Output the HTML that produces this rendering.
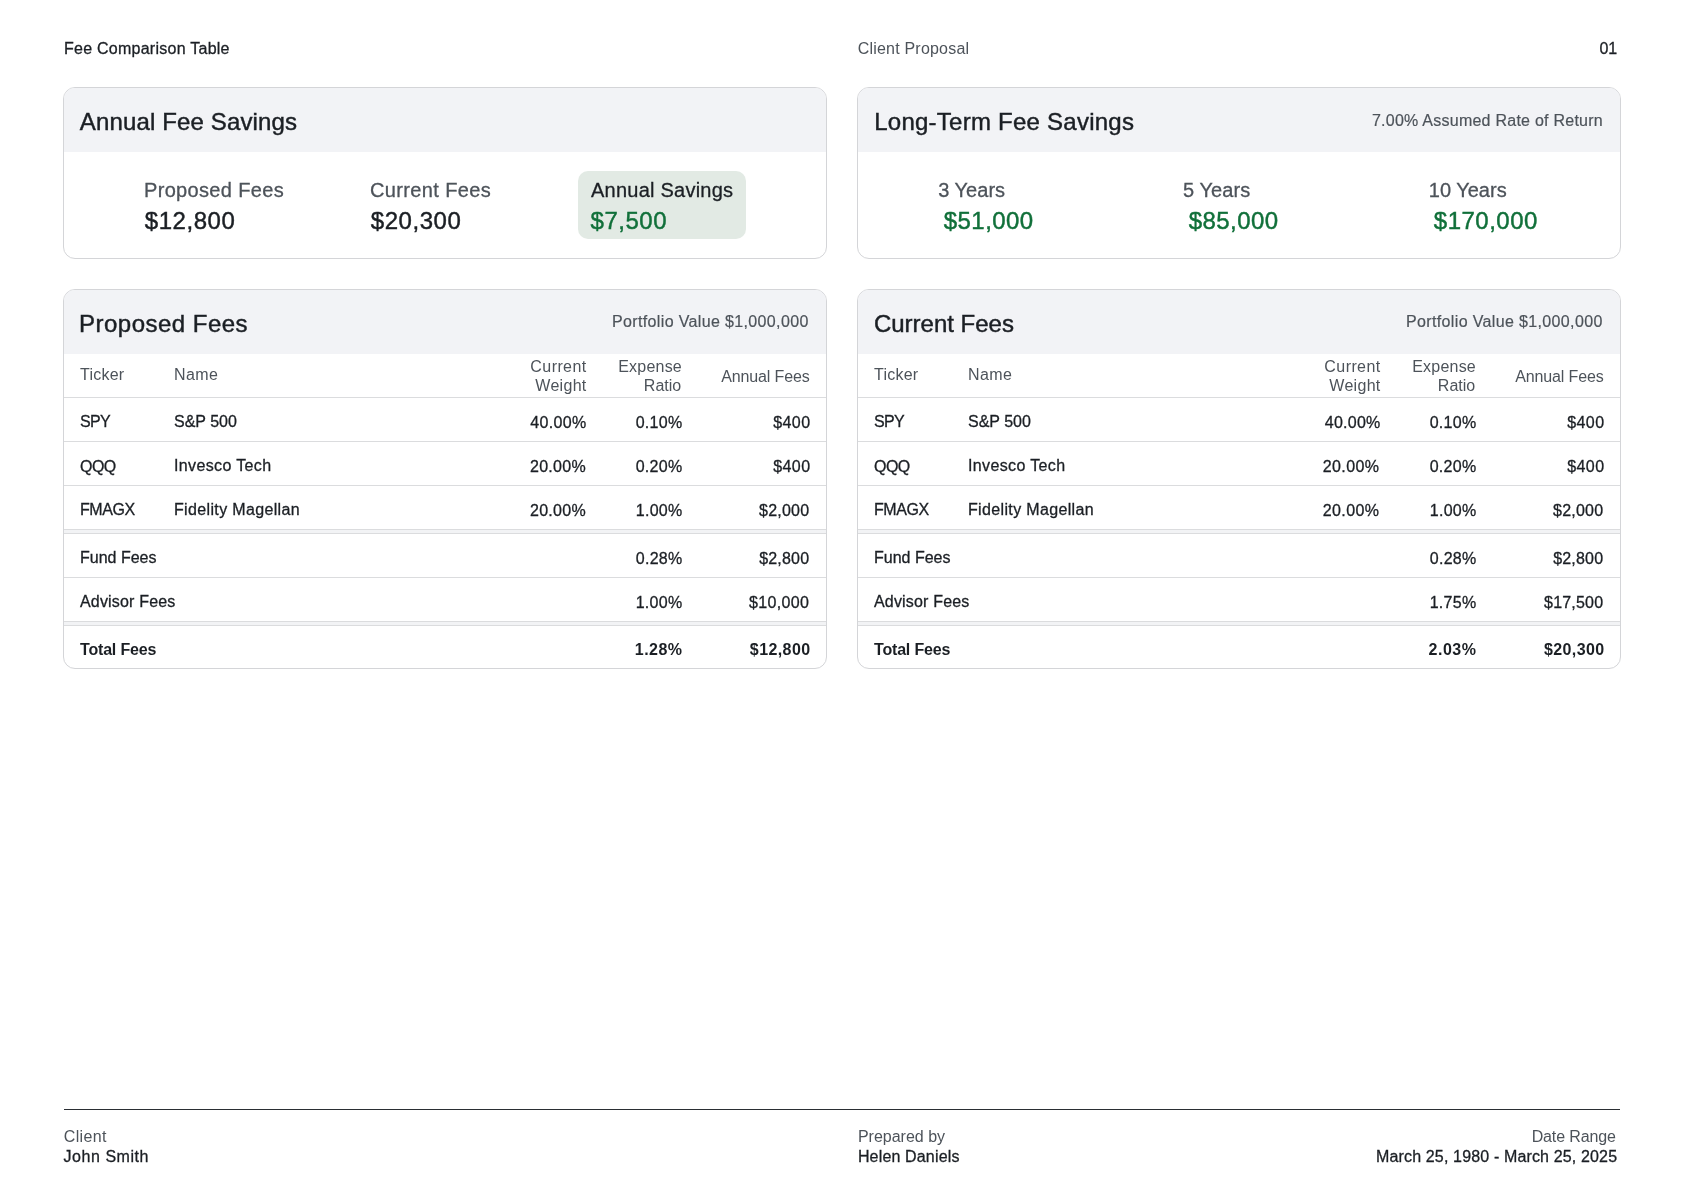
<!DOCTYPE html>
<html><head><meta charset="utf-8"><title>Fee Comparison Table</title><style>
*{margin:0;padding:0;box-sizing:border-box}
html,body{width:1684px;height:1190px;background:#fff;overflow:hidden}
body{position:relative;font-family:"Liberation Sans",sans-serif;--sw:0.25px}
.layer{position:absolute;left:0;top:0;width:1684px;height:1190px;will-change:transform}
.t{position:absolute;white-space:nowrap;line-height:1}
.card{position:absolute;border:1px solid #d4d5d8;border-radius:12px;overflow:hidden;background:#fff}
.hd{position:absolute;left:0;right:0;top:0;height:64px;background:#f2f3f6}
.ln{position:absolute;left:0;right:0;height:1px;background:#dbdcde}
.band{position:absolute;left:0;right:0;height:3px;background:#f2f3f5}
.pill{position:absolute;background:#e2eae4;border-radius:10px}
.foot{position:absolute;left:64px;width:1556px;top:1109px;height:1px;background:#2a2e33}
</style></head>
<body>
<div class="card" style="left:63px;top:87px;width:764px;height:172px"><div class="hd"></div></div>
<div class="card" style="left:63px;top:289px;width:764px;height:380px"><div class="hd"></div><div class="band" style="top:240px"></div><div class="band" style="top:332px"></div><div class="ln" style="top:107px"></div><div class="ln" style="top:151px"></div><div class="ln" style="top:195px"></div><div class="ln" style="top:239px"></div><div class="ln" style="top:243px"></div><div class="ln" style="top:287px"></div><div class="ln" style="top:331px"></div><div class="ln" style="top:335px"></div></div>
<div class="card" style="left:857px;top:87px;width:764px;height:172px"><div class="hd"></div></div>
<div class="card" style="left:857px;top:289px;width:764px;height:380px"><div class="hd"></div><div class="band" style="top:240px"></div><div class="band" style="top:332px"></div><div class="ln" style="top:107px"></div><div class="ln" style="top:151px"></div><div class="ln" style="top:195px"></div><div class="ln" style="top:239px"></div><div class="ln" style="top:243px"></div><div class="ln" style="top:287px"></div><div class="ln" style="top:331px"></div><div class="ln" style="top:335px"></div></div>
<div class="pill" style="left:578px;top:171px;width:168px;height:68px"></div>
<div class="foot"></div>
<div class="layer">
<div class="t" style="top:40.76px;font-size:16px;color:#1b1f24;letter-spacing:0.253px;-webkit-text-stroke:0.3px currentColor;left:64.00px;">Fee Comparison Table</div>
<div class="t" style="top:40.50px;font-size:16px;color:#4d535a;letter-spacing:0.206px;left:857.70px;">Client Proposal</div>
<div class="t" style="top:40.50px;font-size:16px;color:#1b1f24;-webkit-text-stroke:0.3px currentColor;right:66.80px;">01</div>
<div class="t" style="top:109.96px;font-size:24px;color:#1b1f24;letter-spacing:0.141px;-webkit-text-stroke:0.45px currentColor;left:79.80px;">Annual Fee Savings</div>
<div class="t" style="top:180.00px;font-size:20px;color:#4d535a;letter-spacing:0.333px;-webkit-text-stroke:0.3px currentColor;left:144.00px;">Proposed Fees</div>
<div class="t" style="top:208.70px;font-size:24px;color:#1b1f24;letter-spacing:0.533px;-webkit-text-stroke:0.45px currentColor;left:144.80px;">$12,800</div>
<div class="t" style="top:180.00px;font-size:20px;color:#4d535a;letter-spacing:0.364px;-webkit-text-stroke:0.3px currentColor;left:370.00px;">Current Fees</div>
<div class="t" style="top:208.70px;font-size:24px;color:#1b1f24;letter-spacing:0.533px;-webkit-text-stroke:0.45px currentColor;left:370.80px;">$20,300</div>
<div class="t" style="top:180.00px;font-size:20px;color:#1b1f24;letter-spacing:0.234px;-webkit-text-stroke:0.3px currentColor;left:591.04px;">Annual Savings</div>
<div class="t" style="top:208.70px;font-size:24px;color:#11703a;letter-spacing:0.512px;-webkit-text-stroke:0.45px currentColor;left:590.56px;">$7,500</div>
<div class="t" style="top:109.96px;font-size:24px;color:#1b1f24;letter-spacing:0.248px;-webkit-text-stroke:0.45px currentColor;left:874.22px;">Long-Term Fee Savings</div>
<div class="t" style="top:112.50px;font-size:16px;color:#4d535a;letter-spacing:0.249px;-webkit-text-stroke:0.2px currentColor;right:81.00px;">7.00% Assumed Rate of Return</div>
<div class="t" style="top:180.00px;font-size:20px;color:#4d535a;letter-spacing:0.013px;-webkit-text-stroke:0.3px currentColor;left:938.26px;">3 Years</div>
<div class="t" style="top:208.70px;font-size:24px;color:#11703a;letter-spacing:0.440px;-webkit-text-stroke:0.45px currentColor;left:943.80px;">$51,000</div>
<div class="t" style="top:180.00px;font-size:20px;color:#4d535a;letter-spacing:0.093px;-webkit-text-stroke:0.3px currentColor;left:1182.90px;">5 Years</div>
<div class="t" style="top:208.70px;font-size:24px;color:#11703a;letter-spacing:0.427px;-webkit-text-stroke:0.45px currentColor;left:1188.80px;">$85,000</div>
<div class="t" style="top:180.00px;font-size:20px;color:#4d535a;-webkit-text-stroke:0.3px currentColor;left:1428.80px;">10 Years</div>
<div class="t" style="top:208.70px;font-size:24px;color:#11703a;letter-spacing:0.503px;-webkit-text-stroke:0.45px currentColor;left:1433.80px;">$170,000</div>
<div class="t" style="top:311.90px;font-size:24px;color:#1b1f24;letter-spacing:0.480px;-webkit-text-stroke:0.45px currentColor;left:79.02px;">Proposed Fees</div>
<div class="t" style="top:314.00px;font-size:16px;color:#4d535a;letter-spacing:0.358px;-webkit-text-stroke:0.2px currentColor;right:875.30px;">Portfolio Value $1,000,000</div>
<div class="t" style="top:366.50px;font-size:16px;color:#4d535a;letter-spacing:0.240px;left:80.00px;">Ticker</div>
<div class="t" style="top:366.50px;font-size:16px;color:#4d535a;letter-spacing:0.373px;left:174.00px;">Name</div>
<div class="t" style="top:358.50px;font-size:16px;color:#4d535a;letter-spacing:0.413px;right:1097.40px;">Current</div>
<div class="t" style="top:377.90px;font-size:16px;color:#4d535a;letter-spacing:0.304px;right:1097.40px;">Weight</div>
<div class="t" style="top:358.50px;font-size:16px;color:#4d535a;letter-spacing:0.227px;right:1002.00px;">Expense</div>
<div class="t" style="top:377.90px;font-size:16px;color:#4d535a;right:1002.80px;">Ratio</div>
<div class="t" style="top:368.80px;font-size:16px;color:#4d535a;letter-spacing:-0.112px;right:874.26px;">Annual Fees</div>
<div class="t" style="top:413.94px;font-size:16px;color:#1b1f24;letter-spacing:-0.680px;-webkit-text-stroke:0.3px currentColor;left:80.00px;">SPY</div>
<div class="t" style="top:413.94px;font-size:16px;color:#1b1f24;-webkit-text-stroke:0.3px currentColor;left:174.00px;">S&amp;P 500</div>
<div class="t" style="top:414.50px;font-size:16px;color:#1b1f24;letter-spacing:0.352px;-webkit-text-stroke:0.3px currentColor;right:1097.40px;">40.00%</div>
<div class="t" style="top:414.50px;font-size:16px;color:#1b1f24;letter-spacing:0.300px;-webkit-text-stroke:0.3px currentColor;right:1001.50px;">0.10%</div>
<div class="t" style="top:414.50px;font-size:16px;color:#1b1f24;letter-spacing:0.427px;-webkit-text-stroke:0.3px currentColor;right:873.50px;">$400</div>
<div class="t" style="top:458.50px;font-size:16px;color:#1b1f24;letter-spacing:-0.520px;-webkit-text-stroke:0.3px currentColor;left:80.00px;">QQQ</div>
<div class="t" style="top:457.94px;font-size:16px;color:#1b1f24;letter-spacing:0.364px;-webkit-text-stroke:0.3px currentColor;left:174.00px;">Invesco Tech</div>
<div class="t" style="top:458.50px;font-size:16px;color:#1b1f24;letter-spacing:0.288px;-webkit-text-stroke:0.3px currentColor;right:1098.04px;">20.00%</div>
<div class="t" style="top:458.50px;font-size:16px;color:#1b1f24;letter-spacing:0.300px;-webkit-text-stroke:0.3px currentColor;right:1001.50px;">0.20%</div>
<div class="t" style="top:458.50px;font-size:16px;color:#1b1f24;letter-spacing:0.427px;-webkit-text-stroke:0.3px currentColor;right:873.50px;">$400</div>
<div class="t" style="top:501.94px;font-size:16px;color:#1b1f24;letter-spacing:-0.400px;-webkit-text-stroke:0.3px currentColor;left:80.00px;">FMAGX</div>
<div class="t" style="top:501.94px;font-size:16px;color:#1b1f24;letter-spacing:0.350px;-webkit-text-stroke:0.3px currentColor;left:174.00px;">Fidelity Magellan</div>
<div class="t" style="top:502.50px;font-size:16px;color:#1b1f24;letter-spacing:0.288px;-webkit-text-stroke:0.3px currentColor;right:1098.04px;">20.00%</div>
<div class="t" style="top:502.50px;font-size:16px;color:#1b1f24;letter-spacing:0.260px;-webkit-text-stroke:0.3px currentColor;right:1001.50px;">1.00%</div>
<div class="t" style="top:502.50px;font-size:16px;color:#1b1f24;letter-spacing:0.224px;-webkit-text-stroke:0.3px currentColor;right:874.70px;">$2,000</div>
<div class="t" style="top:549.94px;font-size:16px;color:#1b1f24;-webkit-text-stroke:0.3px currentColor;left:80.00px;">Fund Fees</div>
<div class="t" style="top:550.50px;font-size:16px;color:#1b1f24;letter-spacing:0.260px;-webkit-text-stroke:0.3px currentColor;right:1001.50px;">0.28%</div>
<div class="t" style="top:550.50px;font-size:16px;color:#1b1f24;letter-spacing:0.208px;-webkit-text-stroke:0.3px currentColor;right:874.70px;">$2,800</div>
<div class="t" style="top:593.94px;font-size:16px;color:#1b1f24;letter-spacing:0.175px;-webkit-text-stroke:0.3px currentColor;left:80.00px;">Advisor Fees</div>
<div class="t" style="top:594.50px;font-size:16px;color:#1b1f24;letter-spacing:0.300px;-webkit-text-stroke:0.3px currentColor;right:1001.50px;">1.00%</div>
<div class="t" style="top:594.50px;font-size:16px;color:#1b1f24;letter-spacing:0.347px;-webkit-text-stroke:0.3px currentColor;right:874.70px;">$10,000</div>
<div class="t" style="top:642.00px;font-size:16px;color:#1b1f24;letter-spacing:-0.178px;font-weight:700;left:80.00px;">Total Fees</div>
<div class="t" style="top:642.00px;font-size:16px;color:#1b1f24;letter-spacing:0.460px;font-weight:700;right:1001.50px;">1.28%</div>
<div class="t" style="top:642.00px;font-size:16px;color:#1b1f24;letter-spacing:0.400px;font-weight:700;right:873.50px;">$12,800</div>
<div class="t" style="top:311.90px;font-size:24px;color:#1b1f24;-webkit-text-stroke:0.45px currentColor;left:873.90px;">Current Fees</div>
<div class="t" style="top:314.00px;font-size:16px;color:#4d535a;letter-spacing:0.358px;-webkit-text-stroke:0.2px currentColor;right:81.30px;">Portfolio Value $1,000,000</div>
<div class="t" style="top:366.50px;font-size:16px;color:#4d535a;letter-spacing:0.240px;left:874.00px;">Ticker</div>
<div class="t" style="top:366.50px;font-size:16px;color:#4d535a;letter-spacing:0.373px;left:968.00px;">Name</div>
<div class="t" style="top:358.50px;font-size:16px;color:#4d535a;letter-spacing:0.413px;right:303.40px;">Current</div>
<div class="t" style="top:377.90px;font-size:16px;color:#4d535a;letter-spacing:0.304px;right:303.40px;">Weight</div>
<div class="t" style="top:358.50px;font-size:16px;color:#4d535a;letter-spacing:0.227px;right:208.00px;">Expense</div>
<div class="t" style="top:377.90px;font-size:16px;color:#4d535a;right:208.80px;">Ratio</div>
<div class="t" style="top:368.80px;font-size:16px;color:#4d535a;letter-spacing:-0.112px;right:80.26px;">Annual Fees</div>
<div class="t" style="top:413.94px;font-size:16px;color:#1b1f24;letter-spacing:-0.680px;-webkit-text-stroke:0.3px currentColor;left:874.00px;">SPY</div>
<div class="t" style="top:413.94px;font-size:16px;color:#1b1f24;-webkit-text-stroke:0.3px currentColor;left:968.00px;">S&amp;P 500</div>
<div class="t" style="top:414.50px;font-size:16px;color:#1b1f24;letter-spacing:0.256px;-webkit-text-stroke:0.3px currentColor;right:303.40px;">40.00%</div>
<div class="t" style="top:414.50px;font-size:16px;color:#1b1f24;letter-spacing:0.300px;-webkit-text-stroke:0.3px currentColor;right:207.50px;">0.10%</div>
<div class="t" style="top:414.50px;font-size:16px;color:#1b1f24;letter-spacing:0.427px;-webkit-text-stroke:0.3px currentColor;right:79.50px;">$400</div>
<div class="t" style="top:458.50px;font-size:16px;color:#1b1f24;letter-spacing:-0.520px;-webkit-text-stroke:0.3px currentColor;left:874.00px;">QQQ</div>
<div class="t" style="top:457.94px;font-size:16px;color:#1b1f24;letter-spacing:0.364px;-webkit-text-stroke:0.3px currentColor;left:968.00px;">Invesco Tech</div>
<div class="t" style="top:458.50px;font-size:16px;color:#1b1f24;letter-spacing:0.416px;-webkit-text-stroke:0.3px currentColor;right:304.52px;">20.00%</div>
<div class="t" style="top:458.50px;font-size:16px;color:#1b1f24;letter-spacing:0.300px;-webkit-text-stroke:0.3px currentColor;right:207.50px;">0.20%</div>
<div class="t" style="top:458.50px;font-size:16px;color:#1b1f24;letter-spacing:0.427px;-webkit-text-stroke:0.3px currentColor;right:79.50px;">$400</div>
<div class="t" style="top:501.94px;font-size:16px;color:#1b1f24;letter-spacing:-0.400px;-webkit-text-stroke:0.3px currentColor;left:874.00px;">FMAGX</div>
<div class="t" style="top:501.94px;font-size:16px;color:#1b1f24;letter-spacing:0.350px;-webkit-text-stroke:0.3px currentColor;left:968.00px;">Fidelity Magellan</div>
<div class="t" style="top:502.50px;font-size:16px;color:#1b1f24;letter-spacing:0.416px;-webkit-text-stroke:0.3px currentColor;right:304.52px;">20.00%</div>
<div class="t" style="top:502.50px;font-size:16px;color:#1b1f24;letter-spacing:0.260px;-webkit-text-stroke:0.3px currentColor;right:207.50px;">1.00%</div>
<div class="t" style="top:502.50px;font-size:16px;color:#1b1f24;letter-spacing:0.224px;-webkit-text-stroke:0.3px currentColor;right:80.70px;">$2,000</div>
<div class="t" style="top:549.94px;font-size:16px;color:#1b1f24;-webkit-text-stroke:0.3px currentColor;left:874.00px;">Fund Fees</div>
<div class="t" style="top:550.50px;font-size:16px;color:#1b1f24;letter-spacing:0.260px;-webkit-text-stroke:0.3px currentColor;right:207.50px;">0.28%</div>
<div class="t" style="top:550.50px;font-size:16px;color:#1b1f24;letter-spacing:0.208px;-webkit-text-stroke:0.3px currentColor;right:80.70px;">$2,800</div>
<div class="t" style="top:593.94px;font-size:16px;color:#1b1f24;letter-spacing:0.175px;-webkit-text-stroke:0.3px currentColor;left:874.00px;">Advisor Fees</div>
<div class="t" style="top:594.50px;font-size:16px;color:#1b1f24;letter-spacing:0.300px;-webkit-text-stroke:0.3px currentColor;right:207.50px;">1.75%</div>
<div class="t" style="top:594.50px;font-size:16px;color:#1b1f24;letter-spacing:0.200px;-webkit-text-stroke:0.3px currentColor;right:80.70px;">$17,500</div>
<div class="t" style="top:642.00px;font-size:16px;color:#1b1f24;letter-spacing:-0.178px;font-weight:700;left:874.00px;">Total Fees</div>
<div class="t" style="top:642.00px;font-size:16px;color:#1b1f24;letter-spacing:0.520px;font-weight:700;right:207.50px;">2.03%</div>
<div class="t" style="top:642.00px;font-size:16px;color:#1b1f24;letter-spacing:0.373px;font-weight:700;right:79.50px;">$20,300</div>
<div class="t" style="top:1128.50px;font-size:16px;color:#4d535a;letter-spacing:0.384px;left:63.70px;">Client</div>
<div class="t" style="top:1148.50px;font-size:16px;color:#1b1f24;letter-spacing:0.551px;-webkit-text-stroke:0.3px currentColor;left:63.50px;">John Smith</div>
<div class="t" style="top:1128.50px;font-size:16px;color:#4d535a;left:857.90px;">Prepared by</div>
<div class="t" style="top:1148.50px;font-size:16px;color:#1b1f24;letter-spacing:0.160px;-webkit-text-stroke:0.3px currentColor;left:857.90px;">Helen Daniels</div>
<div class="t" style="top:1128.50px;font-size:16px;color:#4d535a;letter-spacing:-0.133px;right:68.26px;">Date Range</div>
<div class="t" style="top:1148.50px;font-size:16px;color:#1b1f24;letter-spacing:0.147px;-webkit-text-stroke:0.3px currentColor;right:66.82px;">March 25, 1980 - March 25, 2025</div>
</div>
</body></html>
